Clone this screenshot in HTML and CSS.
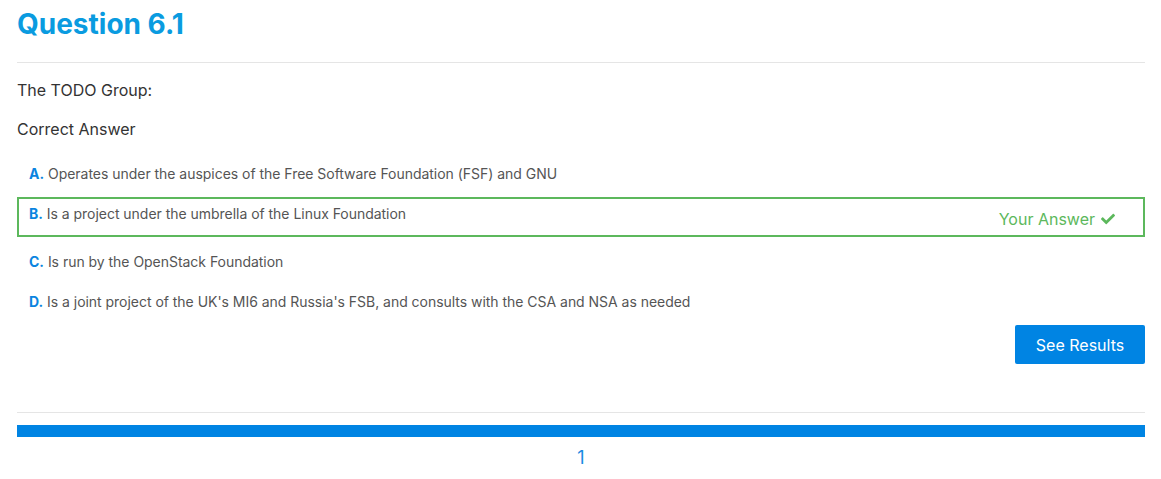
FILE: index.html
```html
<!DOCTYPE html>
<html>
<head>
<meta charset="utf-8">
<link rel="stylesheet" href="styles.css">
</head>
<body>
<div class="page">
  <h1 class="title">Question 6.1</h1>
  <hr class="rule">
  <div class="prompts">
    <p class="prompt">The TODO Group:</p>
    <p class="prompt">Correct Answer</p>
  </div>
  <ul class="options">
    <li class="option"><span class="text"><b class="letter">A.</b> Operates under the auspices of the Free Software Foundation (FSF) and GNU</span></li>
    <li class="option chosen"><span class="text"><b class="letter">B.</b> Is a project under the umbrella of the Linux Foundation</span>
      <span class="yours">Your Answer
        <svg class="check" viewBox="0 0 512 512"><path fill="currentColor" d="M173.898 439.404l-166.4-166.4c-9.997-9.997-9.997-26.206 0-36.204l36.203-36.204c9.997-9.998 26.207-9.998 36.204 0L192 312.690 432.095 72.596c9.997-9.997 26.207-9.997 36.204 0l36.203 36.204c9.997 9.997 9.997 26.206 0 36.204l-294.4 294.401c-9.998 9.997-26.207 9.997-36.204-.001z"/></svg>
      </span>
    </li>
    <li class="option"><span class="text"><b class="letter">C.</b> Is run by the OpenStack Foundation</span></li>
    <li class="option"><span class="text"><b class="letter">D.</b> Is a joint project of the UK's MI6 and Russia's FSB, and consults with the CSA and NSA as needed</span></li>
  </ul>
  <div class="actions">
    <button class="btn">See Results</button>
  </div>
  <hr class="rule bottom">
  <div class="progress"></div>
  <div class="pager"><span class="page-num">1</span></div>
</div>
</body>
</html>
```
FILE: styles.css
```css
* { box-sizing: border-box; }
html, body { margin: 0; padding: 0; background: #fff; }
body { font-family: Inter, "Noto Sans", sans-serif; color: #333; }
.page { padding: 0 16px 0 17px; }
.title {
  margin: 6px 0 0;
  font-size: 28px;
  line-height: 36px;
  font-weight: 700;
  color: #0a9be0;
}
.rule { border: 0; border-top: 1px solid #e5e5e5; margin: 20px 0 15px; height: 0; }
.prompts { display: flex; flex-direction: column; gap: 15px; }
.prompt { margin: 0; font-size: 16px; line-height: 24px; color: #333; }
.options { list-style: none; margin: 13px 0 0; padding: 0; }
.option {
  display: flex;
  align-items: flex-start;
  justify-content: space-between;
  padding: 10px 12px;
  font-size: 14px;
  line-height: 20px;
  color: #555;
  letter-spacing: -0.03px;
}
.letter { color: #0a84e0; font-weight: 700; }
.chosen {
  border: 2px solid #5cb85c;
  padding: 5px 28px 6px 10px;
  margin: 3px 0 5px;
}
.yours {
  display: flex;
  align-items: center;
  gap: 6px;
  margin-top: 5px;
  font-size: 16px;
  line-height: 20px;
  color: #5cb85c;
  letter-spacing: 0;
}
.check { width: 14px; height: 14px; }
.actions { display: flex; justify-content: flex-end; margin-top: 3px; }
.btn {
  width: 130px;
  height: 39px;
  border: 0;
  border-radius: 2px;
  background: #0084e3;
  color: #fff;
  font-family: Inter, "Noto Sans", sans-serif;
  font-size: 16px;
}
.rule.bottom { margin: 48px 0 12px; }
.progress { height: 12px; background: #0084e3; }
.pager { display: flex; justify-content: center; padding-top: 9px; }
.page-num { font-size: 18px; line-height: 24px; color: #1a8ae2; }
```
